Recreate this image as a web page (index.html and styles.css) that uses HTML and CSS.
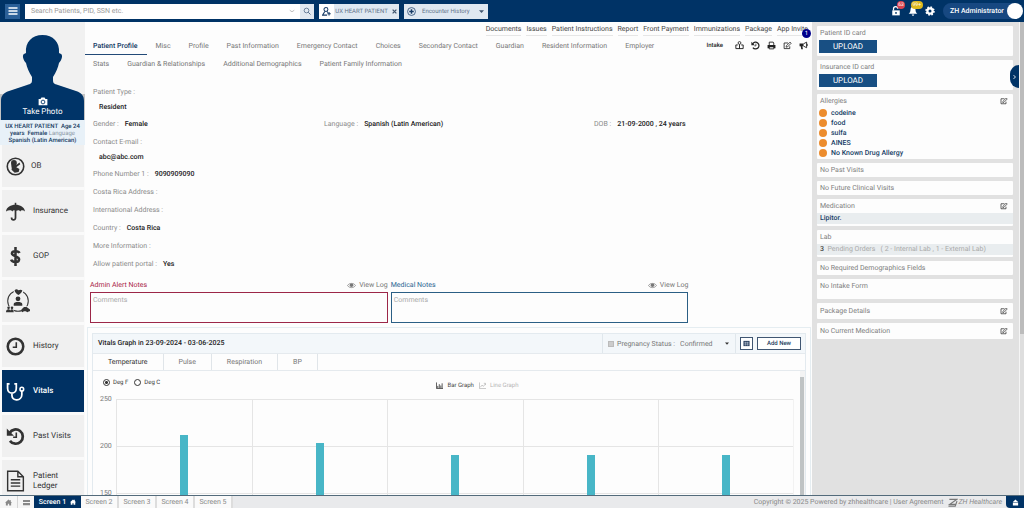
FILE: index.html
```html
<!DOCTYPE html>
<html lang="en">
<head>
<meta charset="utf-8">
<title>Patient Profile</title>
<link rel="stylesheet" href="styles.css">
</head>
<body>
<svg class="sprite" aria-hidden="true">
  <symbol id="edit" viewBox="0 0 16 16"><path d="M12 9.500v4H2v-10h7" fill="none" stroke="currentColor" stroke-width="1.500"/><path d="M6 8.500l6.500-6.500 2 2L8 10.500l-2.500.500z" fill="none" stroke="currentColor" stroke-width="1.400"/></symbol>
  <symbol id="eye" viewBox="0 0 16 12"><path d="M1 6C4 1 12 1 15 6C12 11 4 11 1 6z" fill="none" stroke="currentColor" stroke-width="1.300"/><circle cx="8" cy="5.500" r="3.200" fill="currentColor"/></symbol>
  <symbol id="history" viewBox="0 0 24 24"><path d="M4.500 7.500A9 9 0 1 1 5 17.500" fill="none" stroke="currentColor" stroke-width="3.400"/><path d="M1 2v9h9z" fill="currentColor"/><path d="M13 7v6H9" fill="none" stroke="currentColor" stroke-width="2"/></symbol>
  <symbol id="home" viewBox="0 0 16 16"><path d="M8 1L0 8.500h2V15h4.500v-4h3v4H14V8.500h2L13 5.600V2h-2v1.800z" fill="currentColor"/></symbol>
  <symbol id="caret" viewBox="0 0 8 8"><path d="M0 2h8L4 6.500z" fill="currentColor"/></symbol>
</svg>
<div class="app">
  <header class="topbar">
    <button class="menu" aria-label="Menu"><svg viewBox="0 0 16 16"><path d="M2 4h12M2 8h12M2 12h12" stroke="#fff" stroke-width="2"/></svg></button>
    <div class="search">
      <input type="text" aria-label="Search patients" placeholder="Search Patients, PID, SSN etc.">
      <svg class="tick" viewBox="0 0 8 8"><path d="M1 3l3 2 3-2" fill="none" stroke="#aaa"/></svg>
      <button aria-label="Search"><svg viewBox="0 0 16 16"><path d="M10.500 10.500L15 15" stroke="#526b88" stroke-width="2"/><circle cx="7" cy="7" r="4.700" fill="none" stroke="#526b88" stroke-width="1.600"/></svg></button>
    </div>
    <div class="chip patient">
      <svg class="chip-icon" viewBox="0 0 16 16"><circle cx="7" cy="4.500" r="3.500" fill="none" stroke="#173b66" stroke-width="1.800"/><path d="M5 8L1 14.500H9M9 8l1.500 2M12.500 9v6M9.500 12h6" fill="none" stroke="#173b66" stroke-width="1.900"/></svg>
      <span class="chip-text">UX HEART PATIENT</span>
      <button aria-label="Close patient"><svg viewBox="0 0 8 8"><path d="M1 1l6 6M7 1L1 7" stroke="#40566f" stroke-width="2"/></svg></button>
    </div>
    <div class="chip encounter">
      <svg class="chip-icon" viewBox="0 0 16 16"><circle cx="8" cy="8" r="7" fill="none" stroke="#3a5a80" stroke-width="1.600"/><path d="M8 4v8M4 8h8" stroke="#173b66" stroke-width="2.600"/></svg>
      <select aria-label="Encounter"><option>Encounter History</option></select>
      <svg class="caret" viewBox="0 0 8 8"><use href="#caret"/></svg>
    </div>
    <div class="topright">
      <button class="alert" aria-label="Locked"><svg viewBox="0 0 16 16"><path d="M2 7h12v8H2z" fill="#fff"/><path d="M4 7V4.500a3.500 3.500 0 0 1 7 0" fill="none" stroke="#fff" stroke-width="2"/><circle cx="8" cy="11" r="1.500" fill="#003366"/></svg><span class="badge red">63</span></button>
      <button class="alert" aria-label="Notifications"><svg viewBox="0 0 16 16"><path d="M8 1c-3 0-4 2.500-4 5 0 4-1.500 5-3 6.500h14C13.500 11 12 10 12 6c0-2.500-1-5-4-5zM6 13.500h4a2 2 0 0 1-4 0z" fill="#fff"/></svg><span class="badge yellow">99+</span></button>
      <button class="alert" aria-label="Settings"><svg viewBox="0 0 16 16"><circle cx="8" cy="8" r="4.200" fill="none" stroke="#fff" stroke-width="3.600"/><circle cx="8" cy="8" r="6.300" fill="none" stroke="#fff" stroke-width="2.600" stroke-dasharray="2.600 2.348"/></svg></button>
      <button class="account"><span>ZH Administrator</span><span class="avatar"></span></button>
    </div>
  </header>

  <div class="workspace">
    <div class="sidebar">
      <div class="photo">
        <svg viewBox="0 0 85 98" preserveAspectRatio="none"><path d="M0 72h85v26H0z" fill="#c4c4c4"/><path d="M1 98V79c0-5 2-8 8-10l18-6c4-1 5-2 5-5V55c-3-5-5-9-6-14-3-3-4-8-2-9l2-1C25 20 32 13 42.500 13S60 20 59 31l2 1c2 1 1 6-2 9-1 5-3 9-6 14v3c0 3 1 4 5 5l18 6c6 2 8 5 8 10v19z" fill="#003468"/></svg>
        <button class="take"><svg viewBox="0 0 16 14"><path d="M1 3h3l1.500-2.500h5L12 3h3v10H1z" fill="#fff"/><circle cx="8" cy="7.800" r="3" fill="none" stroke="#003468" stroke-width="1.400"/></svg><span>Take Photo</span></button>
      </div>
      <p class="summary">UX HEART PATIENT &nbsp;Age 24<br>years &nbsp;Female <span>Language</span><br>Spanish (Latin American)</p>
      <nav class="sidenav">
        <a href="#" class="near"><svg viewBox="0 0 24 24"><circle cx="12" cy="12" r="10.400" fill="none" stroke="currentColor" stroke-width="2"/><circle cx="10" cy="7.500" r="3.700" fill="currentColor"/><path d="M7 9c-1 3 1 4 0 7l4 4 5-1 1-4-4-2 5-4-1-2-4 3-1-2z" fill="currentColor"/></svg>OB</a>
        <a href="#"><svg viewBox="0 0 24 24"><path d="M12 1v3" stroke="currentColor" stroke-width="2"/><path d="M0 12C1 .500 23 .500 24 12c-2-2-5-2-6 0-1-2-3-2-5-1-2-1-4-1-5 1-1-2-5-2-8 0z" fill="currentColor"/><path d="M12 10v10c0 3.500-5 3.500-5-.500" fill="none" stroke="currentColor" stroke-width="2.200"/></svg>Insurance</a>
        <a href="#"><svg viewBox="0 0 24 24"><path d="M17 7.500C16 5 8 4 7.500 8S17 11.500 16.500 16 7.500 19.500 6.500 16M12 0v24" fill="none" stroke="currentColor" stroke-width="3.200"/></svg>GOP</a>
        <a href="#" aria-label="Care team"><svg class="wide" viewBox="0 0 28 28"><circle cx="14" cy="14" r="12" fill="none" stroke="currentColor" stroke-width="1.200"/><path d="M9 0h11v7H9zM0 20h9v8H0zM19 20h9v8h-9z" fill="#f0f0f0"/><circle cx="14" cy="11.500" r="2.800" fill="currentColor"/><path d="M9 19.500v-2c0-3 10-3 10 0v2zM10 1.500c2-2 3-1 4.500 0 2-1 3-1 4.500 0 0 2-2 4-4.500 5.500C12 5.500 10 3.500 10 1.500z" fill="currentColor"/><circle cx="3" cy="22" r="1.500" fill="currentColor"/><circle cx="7" cy="22" r="1.500" fill="currentColor"/><path d="M0 27c0-4 4-4 5-2C6 23 9 23 9 27zM18 24l3-3h3l4 3v2h-1l-2 1-2-1h-2l-2 1-1-1z" fill="currentColor"/></svg></a>
        <a href="#"><svg viewBox="0 0 24 24"><circle cx="12" cy="12" r="9.800" fill="none" stroke="currentColor" stroke-width="3.200"/><path d="M13 6.500V13H8.500" fill="none" stroke="currentColor" stroke-width="2"/></svg>History</a>
        <a href="#" class="active" aria-current="page"><svg viewBox="0 0 24 24"><path d="M4.500 2.500H2V8c0 8 11 8 11 0V2.500h-2.500M7.500 14v3c0 8 12.500 7 12.500-1v-5" fill="none" stroke="currentColor" stroke-width="2.200"/><circle cx="20" cy="9" r="2.300" fill="none" stroke="currentColor" stroke-width="2"/></svg>Vitals</a>
        <a href="#"><svg viewBox="0 0 24 24"><use href="#history"/></svg>Past Visits</a>
        <a href="#"><svg class="doc" viewBox="0 0 24 28"><path d="M2 1.500h13l7 7V26.500H2zM15 1.500v7h7M6 12.500h12M6 16.500h12M6 20.500h12" fill="none" stroke="currentColor" stroke-width="1.800"/></svg>Patient<br>Ledger</a>
      </nav>
    </div>

    <main class="main">
      <nav class="quick"><a href="#">Documents</a><a href="#">Issues</a><a href="#">Patient Instructions</a><a href="#">Report</a><a href="#">Front Payment</a><a href="#">Immunizations</a><a href="#">Package</a><a href="#" class="invite">App Invite<span class="count">1</span></a></nav>
      <div class="tabbar">
        <nav class="tabs"><a href="#" class="current">Patient Profile</a><a href="#">Misc</a><a href="#">Profile</a><a href="#">Past Information</a><a href="#">Emergency Contact</a><a href="#">Choices</a><a href="#">Secondary Contact</a><a href="#">Guardian</a><a href="#">Resident Information</a><a href="#">Employer</a></nav>
        <div class="tools">
          <button class="intake">Intake</button>
          <button aria-label="Share"><svg viewBox="0 0 16 16"><circle cx="8" cy="3.500" r="2.500" fill="none" stroke="currentColor" stroke-width="1.500"/><path d="M8 6v8M1.500 7v6.500h13V7H11M1.500 7H5" fill="none" stroke="currentColor" stroke-width="1.700"/></svg></button>
          <button aria-label="History"><svg viewBox="0 0 24 24"><use href="#history"/></svg></button>
          <button aria-label="Print"><svg viewBox="0 0 16 16"><path d="M4 7V2h7l1 1.500V7" fill="none" stroke="currentColor" stroke-width="1.600"/><path d="M1 7h14v6h-3v-2H4v2H1z" fill="currentColor"/><path d="M4 10v4h8v-4" fill="none" stroke="currentColor" stroke-width="1.600"/></svg></button>
          <button aria-label="Edit"><svg viewBox="0 0 16 16"><use href="#edit"/></svg></button>
          <button aria-label="Announcements"><svg viewBox="0 0 16 16"><path d="M1 4.500h7v5H6l1 5H4l-1-5H1z" fill="currentColor"/><path d="M8 5l5.500-3v10L8 9M14.500 5v4" fill="none" stroke="currentColor" stroke-width="1.600"/></svg></button>
        </div>
      </div>
      <nav class="tabs second"><a href="#">Stats</a><a href="#">Guardian &amp; Relationships</a><a href="#">Additional Demographics</a><a href="#">Patient Family Information</a></nav>

      <dl class="profile">
        <div class="stacked"><dt>Patient Type :</dt><dd>Resident</dd></div>
        <div class="triple">
          <div><dt>Gender :</dt><dd>Female</dd></div>
          <div><dt>Language :</dt><dd>Spanish (Latin American)</dd></div>
          <div><dt>DOB :</dt><dd>21-09-2000 , 24 years</dd></div>
        </div>
        <div class="stacked"><dt>Contact E-mail :</dt><dd>abc@abc.com</dd></div>
        <div><dt>Phone Number 1 :</dt><dd>9090909090</dd></div>
        <div><dt>Costa Rica Address :</dt><dd></dd></div>
        <div><dt>International Address :</dt><dd></dd></div>
        <div><dt>Country :</dt><dd>Costa Rica</dd></div>
        <div><dt>More Information :</dt><dd></dd></div>
        <div><dt>Allow patient portal :</dt><dd>Yes</dd></div>
      </dl>

      <div class="notes">
        <div class="note admin">
          <div class="note-head"><label for="admin-note">Admin Alert Notes</label><button><svg viewBox="0 0 16 12"><use href="#eye"/></svg>View Log</button></div>
          <textarea id="admin-note" placeholder="Comments"></textarea>
        </div>
        <div class="note medical">
          <div class="note-head"><label for="medical-note">Medical Notes</label><button><svg viewBox="0 0 16 12"><use href="#eye"/></svg>View Log</button></div>
          <textarea id="medical-note" placeholder="Comments"></textarea>
        </div>
      </div>

      <section class="vitals">
        <div class="vitals-card">
          <div class="vitals-head">
            <h2>Vitals Graph in 23-09-2024 - 03-06-2025</h2>
            <div class="pregnancy"><input type="checkbox" id="preg"><label for="preg">Pregnancy Status :</label><select aria-label="Pregnancy status"><option>Confirmed</option></select><svg class="caret" viewBox="0 0 8 8"><use href="#caret"/></svg></div>
            <div class="actions">
              <button class="calendar" aria-label="Calendar"><svg viewBox="0 0 16 16"><path d="M1 2h14v12H1z" fill="#304564"/><path d="M3 6h10M3 9.500h10M5.500 4v9M10.500 4v9" stroke="#d5dce6"/></svg></button>
              <button class="add">Add New</button>
            </div>
          </div>
          <div class="vital-tabs" role="tablist"><button role="tab" aria-selected="true">Temperature</button><button role="tab">Pulse</button><button role="tab">Respiration</button><button role="tab">BP</button></div>
          <div class="graph">
            <div class="graph-body">
              <div class="graph-options">
                <div class="units"><label><input type="radio" name="unit" checked>Deg F</label><label><input type="radio" name="unit">Deg C</label></div>
                <div class="kinds"><button><svg viewBox="0 0 16 16"><path d="M1 1v14h15M4 14V9M7.500 14V5M11 14V8M14 14V3" fill="none" stroke="currentColor" stroke-width="2"/></svg>Bar Graph</button><button class="off"><svg viewBox="0 0 16 16"><path d="M1 1v14h15M3 12l4-5 3 3 5-6M11 3h4v4" fill="none" stroke="currentColor" stroke-width="1.700"/></svg>Line Graph</button></div>
              </div>
              <div class="chart">
                <div class="axis"><span>250</span><span>200</span><span>150</span></div>
                <div class="plot">
                  <div><i style="height:84.800%"></i></div>
                  <div><i style="height:81.200%"></i></div>
                  <div><i style="height:76%"></i></div>
                  <div><i style="height:76%"></i></div>
                  <div><i style="height:76%"></i></div>
                </div>
              </div>
            </div>
            <div class="track"><span></span></div>
          </div>
        </div>
      </section>
    </main>

    <aside class="panel">
      <section class="card tall"><h3>Patient ID card</h3><button class="upload">UPLOAD</button></section>
      <section class="card tall"><h3>Insurance ID card</h3><button class="upload">UPLOAD</button></section>
      <section class="card">
        <h3>Allergies<button aria-label="Edit allergies"><svg viewBox="0 0 16 16"><use href="#edit"/></svg></button></h3>
        <ul><li>codeine</li><li>food</li><li>sulfa</li><li>AINES</li><li>No Known Drug Allergy</li></ul>
      </section>
      <section class="card"><h3>No Past Visits</h3></section>
      <section class="card"><h3>No Future Clinical Visits</h3></section>
      <section class="card"><h3>Medication<button aria-label="Edit medication"><svg viewBox="0 0 16 16"><use href="#edit"/></svg></button></h3><p class="strip"><b>Lipitor.</b></p></section>
      <section class="card"><h3>Lab</h3><p class="strip"><strong>3</strong> &nbsp;Pending Orders &nbsp;&nbsp;( 2 - Internal Lab , 1 - External Lab)</p></section>
      <section class="card"><h3>No Required Demographics Fields</h3></section>
      <section class="card form"><h3>No Intake Form</h3></section>
      <section class="card roomy"><h3>Package Details<button aria-label="Edit package"><svg viewBox="0 0 16 16"><use href="#edit"/></svg></button></h3></section>
      <section class="card roomy"><h3>No Current Medication<button aria-label="Edit current medication"><svg viewBox="0 0 16 16"><use href="#edit"/></svg></button></h3></section>
      <button class="collapse" aria-label="Collapse panel"><svg viewBox="0 0 8 8"><path d="M2.500 1l3 3-3 3" fill="none" stroke="#fff" stroke-width="1.400"/></svg></button>
    </aside>
    <div class="page-track"><span></span></div>
  </div>

  <footer class="footer">
    <button class="foot-icon" aria-label="Home"><svg viewBox="0 0 16 16"><use href="#home"/></svg></button>
    <button class="foot-icon split" aria-label="Screens"><svg viewBox="0 0 16 16"><path d="M0 2h16v5H0zM0 9h16v5H0z" fill="currentColor"/></svg></button>
    <nav class="screens"><a href="#" class="on">Screen 1<svg viewBox="0 0 16 16"><use href="#home"/></svg></a><a href="#">Screen 2</a><a href="#">Screen 3</a><a href="#">Screen 4</a><a href="#">Screen 5</a></nav>
    <p class="copy">Copyright © 2025 Powered by zhhealthcare | <a href="#">User Agreement</a></p>
    <div class="brand"><svg viewBox="0 0 24 20"><path d="M5 3h17L6 14h14M3 18h15L22 7" fill="none" stroke="#777" stroke-width="2.600"/></svg><span>ZH Healthcare</span></div>
    <button class="lock" aria-label="Lock screen"><svg viewBox="0 0 16 16"><path d="M2 8h12v7H2zM8 1l6 6H2z" fill="#fff"/></svg></button>
  </footer>
</div>
</body>
</html>
```

FILE: styles.css
```css
* { box-sizing: border-box; }
body { margin: 0; font-family: Roboto, "Liberation Sans", sans-serif; font-size: 7px; color: #777; background: #fdfdfd; text-rendering: geometricPrecision; }
a { color: inherit; text-decoration: none; }
button, input, select, textarea { font: inherit; color: inherit; border: 0; padding: 0; margin: 0; background: none; text-rendering: inherit; }
button { display: inline-flex; align-items: center; justify-content: center; cursor: pointer; white-space: nowrap; }
select { appearance: none; }
h2, h3, p, dl, dd, ul { margin: 0; padding: 0; }
svg { display: block; flex: none; }
.sprite { position: absolute; width: 0; height: 0; }
.caret { width: 5px; height: 5px; color: #40566f; }
.app { display: flex; flex-direction: column; height: 100vh; min-height: 400px; overflow: hidden; }

/* Top bar */
.topbar { display: flex; align-items: center; gap: 5px; height: 22px; flex: none; padding: 0 5px; background: #003366; }
.menu { width: 15px; height: 15px; background: #2b6098; }
.menu svg { width: 12px; height: 12px; }
.search { display: flex; align-items: center; width: 289px; height: 15px; background: #fff; }
.search input { flex: 1; min-width: 0; padding-left: 6px; }
.search input::placeholder { color: #999; opacity: 1; }
.search button { width: 14px; height: 15px; background: #e1e8f0; }
.search button svg { width: 8px; height: 8px; }
.tick { width: 6px; height: 6px; margin-right: 5px; }
.chip { display: flex; align-items: center; height: 15px; background: #dfe8f1; color: #62738a; }
.chip-icon { width: 15px; height: 15px; padding: 3px; background: #fff; }
.patient { width: 80px; }
.chip-text { flex: 1; text-align: center; white-space: nowrap; font-size: 6px; }
.patient button { width: 10px; }
.patient button svg { width: 5px; height: 5px; }
.encounter { width: 84px; padding-right: 4px; }
.encounter .chip-icon { background: none; }
.encounter select { flex: 1; min-width: 0; height: 15px; padding-left: 3px; font-size: 6px; }
.topright { display: flex; align-items: center; margin-left: auto; gap: 5px; }
.alert { position: relative; width: 12px; height: 16px; }
.alert svg { width: 10px; height: 10px; }
.badge { position: absolute; top: -2px; right: -3px; min-width: 8px; height: 8px; padding: 0 1px; border-radius: 4px; color: #fff; font-size: 5px; line-height: 8px; }
.red { background: #d94350; }
.yellow { background: #dcb91f; right: -4px; padding: 0 2px; }
.account { justify-content: space-between; gap: 3px; width: 76px; height: 16px; margin-left: 2px; padding-left: 7px; border-radius: 8px; background: #174881; color: #fff; font-weight: 500; }
.avatar { width: 16px; height: 16px; flex: none; border-radius: 50%; background: #fff; }

/* Sidebar */
.workspace { display: flex; flex: 1; min-height: 0; }
.sidebar { width: 85px; flex: none; overflow: hidden; background: #fafafa; }
.photo { position: relative; height: 98px; background: #f1f1f1; }
.photo > svg { width: 100%; height: 98px; }
.take { position: absolute; bottom: 3px; left: 0; width: 100%; flex-direction: column; gap: 1px; color: #fff; font-size: 8px; line-height: 10px; }
.take svg { width: 10px; height: 9px; }
.summary { height: 25px; padding-top: 3px; background: #e8f1f8; color: #173b62; font-size: 6px; font-weight: 500; line-height: 7px; text-align: center; white-space: nowrap; }
.summary span { color: #8b98a4; font-weight: 400; }
.sidenav { display: flex; flex-direction: column; gap: 3px; padding: 0 1px 0 2px; }
.sidenav a { display: flex; align-items: center; gap: 8px; height: 42px; flex: none; padding: 0 4px; background: #f0f0f0; color: #333; font-size: 8px; line-height: 10px; }
.sidenav .near { gap: 6px; }
.sidenav svg { width: 19px; height: 19px; }
.sidenav svg.wide { width: 24px; height: 26px; }
.sidenav svg.doc { height: 22px; }
.sidenav .active { background: #003163; color: #fff; font-weight: 500; }

/* Main column */
.main { flex: 1; min-width: 0; display: flex; flex-direction: column; overflow: hidden; }
.quick { display: flex; justify-content: flex-end; gap: 5px; height: 14px; flex: none; padding-right: 4px; color: #444; line-height: 14px; white-space: nowrap; }
.quick a { border-bottom: 1px solid #e6e6e6; }
.invite { position: relative; }
.count { position: absolute; top: 7px; right: -3px; width: 9px; height: 9px; border-radius: 50%; background: #00008b; color: #fff; font-size: 6px; line-height: 9px; text-align: center; }
.tabbar { display: flex; justify-content: space-between; flex: none; height: 19px; }
.tabs { display: flex; flex: none; white-space: nowrap; }
.tabs a { padding: 2px 9px 0; line-height: 16px; }
.tabs a:first-child { padding-left: 8px; }
.tabs.second a { padding-top: 1px; }
.tabs .current { border-bottom: 1px solid #234a78; color: #123963; font-weight: 500; }
.tools { display: flex; align-items: center; gap: 7px; height: 18px; padding-right: 4px; color: #222; }
.tools svg { width: 9px; height: 9px; }
.intake { margin-right: 5px; font-size: 6px; font-weight: 500; }
.profile { display: flex; flex-direction: column; gap: 2px; flex: none; padding: 12px 8px 0; line-height: 16px; }
.profile div { display: flex; gap: 6px; min-height: 16px; }
.profile .stacked { flex-direction: column; gap: 0; }
.stacked dd { padding-left: 6px; line-height: 14px; }
.profile .triple { display: grid; grid-template-columns: 231px 270px 1fr; gap: 0; }
dt { color: #8b8b8b; }
dd { color: #222; font-weight: 500; }

.notes { display: flex; gap: 3px; flex: none; width: 83%; padding: 6px 0 0 5px; }
.note { flex: 1; min-width: 0; }
.note-head { display: flex; justify-content: space-between; height: 14px; line-height: 14px; }
.note-head button { gap: 3px; }
.note-head svg { width: 9px; height: 7px; }
.note textarea { display: block; width: 100%; height: 31px; padding: 3px 2px; border: 1px solid; resize: none; }
.note textarea::placeholder { color: #aaa; opacity: 1; }
.admin label { color: #a91f49; }
.admin textarea { border-color: #9c2748; }
.medical label { color: #2b6592; }
.medical textarea { border-color: #2b5f85; }

/* Vitals */
.vitals { display: flex; flex: 1; min-height: 0; margin: 4px 1px 0 2px; padding: 5px 4px 0; border: 1px solid #e5edf1; border-bottom: 0; }
.vitals-card { display: flex; flex: 1; min-width: 0; flex-direction: column; border: 1px solid #e3eaef; border-bottom: 0; }
.vitals-head { display: flex; align-items: stretch; height: 19px; flex: none; background: #f3f7fa; }
.vitals-head h2 { flex: 1; padding-left: 5px; color: #222; font-size: 7px; font-weight: 500; line-height: 19px; }
.pregnancy { display: flex; align-items: center; gap: 3px; width: 134px; padding: 0 6px 0 5px; border: solid #e0e7ec; border-width: 0 1px; font-size: 7px; }
.pregnancy input { appearance: none; width: 6px; height: 6px; flex: none; background: #ccc; border: 1px solid #bbb; }
.pregnancy label { white-space: nowrap; }
.pregnancy select { flex: 1; min-width: 0; padding-left: 2px; }
.pregnancy .caret { width: 4px; color: #333; }
.actions { display: flex; align-items: center; gap: 4px; padding: 0 4px; color: #223b5c; }
.actions button { height: 13px; border: 1px solid #405672; background: #fff; }
.calendar { width: 13px; }
.calendar svg { width: 7px; height: 7px; }
.actions .add { width: 44px; font-size: 6px; font-weight: 500; }
.vital-tabs { display: flex; flex: none; height: 18px; border: solid #e5eaee; border-width: 1px 0; }
.vital-tabs button { padding: 0 15px; border-right: 1px solid #e0e5e9; }
.vital-tabs button:first-child { color: #333; }
.graph { display: flex; flex: 1; min-height: 0; }
.graph-body { flex: 1; min-width: 0; overflow: hidden; }
.graph-options { position: relative; display: flex; align-items: center; justify-content: center; height: 28px; }
.units { position: absolute; left: 10px; top: 8px; display: flex; gap: 6px; color: #333; font-size: 6px; }
.units label { display: flex; align-items: center; gap: 3px; }
.units input { appearance: none; width: 7px; height: 7px; border: 1px solid #333; border-radius: 50%; }
.units input:checked { background: radial-gradient(#333 1px, #fff 2px); }
.kinds { display: flex; gap: 5px; padding-left: 62px; color: #444; font-size: 6px; }
.kinds button { gap: 4px; }
.kinds svg { width: 7px; height: 7px; }
.kinds .off { color: #b5b5b5; }
.chart { display: flex; padding-left: 7px; margin-right: 6px; }
.axis { display: flex; flex-direction: column; width: 16px; margin-top: -4px; line-height: 8px; }
.axis span { height: 47px; }
.plot { display: grid; flex: 1; grid-template-columns: repeat(5, 1fr); height: 235px; background: repeating-linear-gradient(#e5e5e5 0 1px, transparent 1px 47px); }
.plot div { display: flex; align-items: flex-end; justify-content: center; border-left: 1px solid #e5e5e5; }
.plot div:last-child { border-right: 1px solid #f2f2f2; }
.plot i { width: 8px; background: #48b6c7; }
.track { width: 5px; flex: none; padding-top: 6px; background: #f3f3f3; }
.track span { display: block; width: 4px; height: 100%; background: #bfc3c4; }

/* Right panel */
.panel { position: relative; display: flex; flex-direction: column; gap: 4px; width: 207px; flex: none; padding: 4px 6px 0 5px; background: #e1e1e1; }
.card { flex: none; border-radius: 1px; background: #fdfdfd; }
.card h3 { display: flex; justify-content: space-between; padding: 0 5px 0 3px; color: #808080; font-size: 7px; font-weight: 400; line-height: 14px; }
.card h3 svg { width: 8px; height: 8px; color: #333; }
.tall { height: 30px; }
.upload { display: flex; width: 58px; height: 13px; margin-left: 2px; background: #184f83; color: #fff; font-size: 8px; }
.card ul { list-style: none; padding: 0 2px 1px; color: #173d66; font-weight: 500; line-height: 10px; }
.card li { display: flex; align-items: center; gap: 4px; }
.card li::before { content: ""; width: 8px; height: 8px; border-radius: 50%; background: #ec8c2d; }
.strip { height: 11px; margin-bottom: 2px; padding-left: 3px; background: #e9edef; color: #aaa; line-height: 11px; white-space: nowrap; }
.strip b { color: #173d66; font-weight: 500; }
.strip strong { color: #444; font-weight: 500; }
.form { height: 20px; }
.card.roomy h3 { line-height: 16px; }
.collapse { position: absolute; top: 43px; right: 0; width: 9px; height: 23px; border-radius: 12px 0 0 12px; background: #003366; }
.collapse svg { width: 5px; height: 6px; }
.page-track { width: 5px; flex: none; border-left: 1px solid #f5f5f5; background: #dedede; }
.page-track span { display: block; height: 66%; background: #bcbcbc; }

/* Footer */
.footer { display: flex; align-items: stretch; height: 13px; flex: none; border-top: 1px solid #536b7b; background: #e9eaec; color: #888; line-height: 12px; white-space: nowrap; }
.foot-icon { width: 17px; background: #f6f6f6; }
.foot-icon svg { width: 7px; height: 7px; }
.split { border-left: 1px solid #d5d5d5; }
.screens { display: flex; }
.screens a { width: 38px; border-right: 2px solid #ddd; background: #fafafa; text-align: center; }
.screens .on { display: flex; align-items: center; justify-content: center; gap: 4px; width: 47px; border: 0; background: #003163; color: #fff; font-weight: 500; }
.screens svg { width: 6px; height: 6px; }
.copy { margin-left: auto; }
.brand { display: flex; align-items: center; gap: 1px; padding: 0 4px 0 3px; font-style: italic; }
.brand svg { width: 11px; height: 9px; }
.lock { width: 18px; background: #003366; border-bottom-left-radius: 4px; }
.lock svg { width: 7px; height: 7px; }
```
